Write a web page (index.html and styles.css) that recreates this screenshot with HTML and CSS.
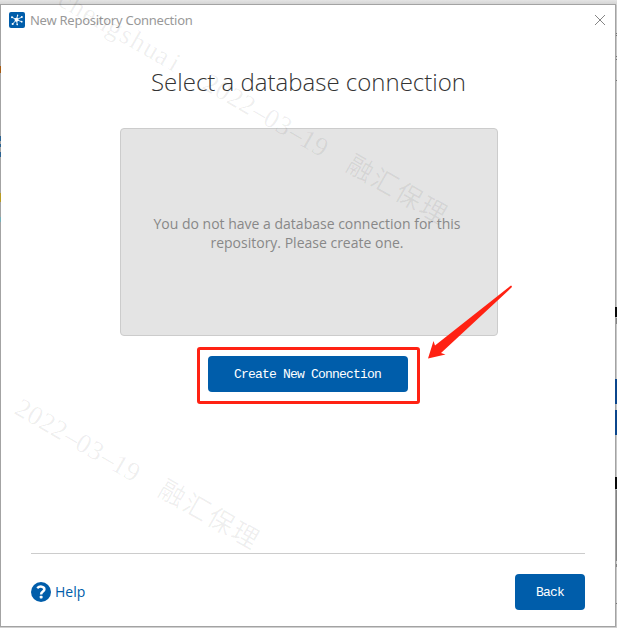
FILE: index.html
```html
<!DOCTYPE html>
<html lang="en">
<head>
<meta charset="utf-8">
<title>New Repository Connection</title>
<link rel="stylesheet" href="styles.css">
</head>
<body>
<div class="window">
  <header class="titlebar">
    <svg class="app-icon" width="16" height="16" viewBox="0 0 16 16">
      <rect width="16" height="16" rx="2" fill="#005daa"/>
      <path d="M7.5 7.7 3.2 5.3M7.5 7.7 8.6 3.4M7.5 7.7 12.7 5.2M7.5 7.7 12.6 9.7M7.5 7.7 8.2 12.5M7.5 7.7 3.8 11.8" stroke="#fff" stroke-width=".9"/>
      <g fill="#fff"><circle cx="7.5" cy="7.7" r="2"/><circle cx="3" cy="5.2" r="1"/><circle cx="8.6" cy="3.3" r=".7"/><circle cx="12.8" cy="5.1" r="1"/><circle cx="12.7" cy="9.7" r=".9"/><circle cx="8.2" cy="12.6" r=".8"/><circle cx="3.7" cy="12" r="1.1"/></g>
    </svg>
    <span class="title">New Repository Connection</span>
    <svg class="close" width="12" height="12" viewBox="0 0 12 12"><path d="M1 1 11 11M11 1 1 11" stroke="#858585" stroke-width="1"/></svg>
  </header>
  <main class="content">
    <h1>Select a database connection</h1>
    <div class="empty"><p>You do not have a database connection for this<br>repository. Please create one.</p></div>
    <div class="highlight"><button class="button create">Create New Connection</button></div>
  </main>
  <footer class="footer">
    <a class="help">
      <svg width="20" height="20" viewBox="0 0 20 20"><circle cx="10" cy="10" r="10" fill="#005daa"/><path d="M6.2 6.1C8.4 4 13.4 3.9 13.4 7.3 13.4 9.7 10.1 9.5 10.1 12.4" fill="none" stroke="#fff" stroke-width="2.5"/><rect x="8.7" y="13.7" width="2.9" height="2.8" rx=".8" fill="#fff"/></svg>
      <span>Help</span>
    </a>
    <button class="button back">Back</button>
  </footer>
</div>
<svg class="overlay" width="617" height="628" viewBox="0 0 617 628">
  <g class="watermark">
    <g transform="translate(201 88) rotate(30)">
      <text x="-167 -154 -139 -125 -111 -96 -84 -69 -55 -39">chengshuai</text>
      <text x="0 14 28 42 57 70 84 99 112 126">2022–03–19</text>
      <text class="cjk" x="165 193 221 249" y="-1">融汇保理</text>
    </g>
    <g transform="translate(13 413) rotate(30)">
      <text x="0 14 28 42 57 70 84 99 112 126">2022–03–19</text>
      <text class="cjk" x="165 193 221 249" y="-1">融汇保理</text>
    </g>
  </g>
  <path d="M511 285.5Q512.5 286 511.5 287.5L441 353 445.5 354.5 428 358.5 433.5 341 435 345.5Z" fill="#ff2213"/>
  <g>
    <path d="M616.5 5V627" stroke="#c8c8c8"/>
    <path d="M616.5 33v1M616.5 35v1M616.5 56v1M616.5 59v1M616.5 80v1M616.5 603v1" stroke="#777"/>
    <path d="M616 307v10M616 477v12" stroke="#080808" stroke-width="2"/>
    <path d="M616 379v25M616 410v25" stroke="#0b468c" stroke-width="2"/>
    <path d="M616.5 318v6M616.5 490v71M616.5 564v3" stroke="#858585"/>
    <path d="M.5 66v7" stroke="#a65b12"/>
    <path d="M.5 136v5M.5 144v3M.5 152v5" stroke="#2b6291"/>
    <path d="M.5 193v9" stroke="#b99b22"/>
    <path d="M.5 217v5" stroke="#73afb9"/>
  </g>
</svg>
</body>
</html>
```
FILE: styles.css
```css
* { box-sizing: border-box; }
body {
  margin: 0;
  width: 617px;
  height: 628px;
  padding: 4px 1px 1px 0;
  overflow: hidden;
  background: linear-gradient(#e4e4e4, #d5d5d5 4px, #d0d0d0);
  font-family: "Open Sans", "Noto Sans", sans-serif;
}
.window {
  height: 623px;
  display: flex;
  flex-direction: column;
  border: 1px solid #a3a3a3;
  background: #fff;
}
.titlebar {
  height: 29px;
  display: flex;
  align-items: center;
  padding: 0 9px 0 8px;
}
.title {
  margin-left: 5px;
  font: 13px/18px "Noto Sans", sans-serif;
  letter-spacing: -0.26px;
  color: #999;
}
.close { margin-left: auto; }
.content {
  flex: 1;
  display: flex;
  flex-direction: column;
  align-items: center;
  padding-left: 1px;
}
h1 {
  margin: 30px 0 0;
  font-size: 24px;
  font-weight: 300;
  line-height: 36px;
  color: #333;
  white-space: nowrap;
}
.empty {
  width: 378px;
  height: 208px;
  margin-top: 28px;
  margin-left: 1px;
  display: flex;
  align-items: center;
  justify-content: center;
  padding: 1px 4px 0 0;
  border: 1px solid #ccc;
  border-radius: 4px;
  background: #e4e4e4;
}
.empty p {
  margin: 0;
  font-size: 14px;
  line-height: 19px;
  text-align: center;
  white-space: nowrap;
  color: #888;
}
.highlight {
  width: 223px;
  height: 57px;
  margin: 11px 1px 0 0;
  padding: 6px 8px;
  border: 3px solid #ff2213;
  border-radius: 3px;
}
.button {
  height: 36px;
  padding: 1px 0 0;
  border: 0;
  border-radius: 4px;
  background: #005daa;
  color: #fff;
  font: 13px/35px "Liberation Mono", monospace;
  letter-spacing: -0.8px;
}
.create { display: block; width: 200px; }
.back { width: 70px; }
.footer {
  height: 73px;
  margin: 0 30px 0 30px;
  padding-top: 4px;
  display: flex;
  align-items: center;
  justify-content: space-between;
  border-top: 1px solid #ccc;
}
.help {
  display: flex;
  align-items: center;
  gap: 4px;
  font-size: 14px;
  line-height: 20px;
  color: #005daa;
}
.overlay {
  position: absolute;
  left: 0;
  top: 0;
  pointer-events: none;
}
.watermark {
  fill: #000;
  fill-opacity: .065;
  stroke: #000;
  stroke-opacity: .02;
  stroke-width: .7px;
  font: 27px "Liberation Serif", "Noto Sans CJK SC", serif;
}
.cjk { font: 400 26px "Noto Sans CJK SC", sans-serif; stroke: none; }
```
